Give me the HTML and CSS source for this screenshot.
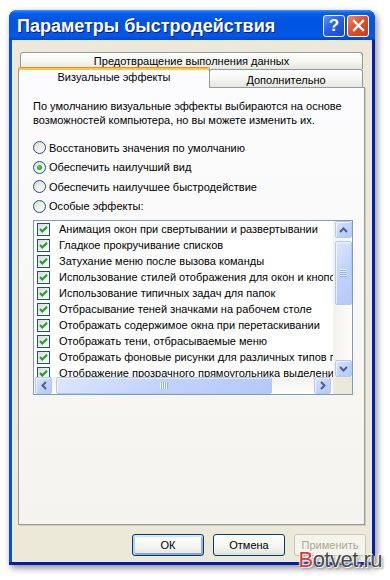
FILE: index.html
```html
<!DOCTYPE html>
<html lang="ru">

<head>
    <meta charset="UTF-8">
    <meta name="viewport" content="width=device-width, initial-scale=1.0">
    <title>Параметры быстродействия</title>
    <link rel="stylesheet" href="styles.css">
</head>

<body>
    <div class="window">
        <div class="titlebar">
            <span class="title">Параметры быстродействия</span>
            <div class="title-btns">
                <div class="tbtn help">?</div>
                <div class="tbtn close">
                    <svg width="13" height="13" viewBox="0 0 13 13">
                        <path d="M2 2 L11 11 M11 2 L2 11" stroke="#fff" stroke-width="2.4" stroke-linecap="square" />
                    </svg>
                </div>
            </div>
        </div>

        <div class="client">
            <!-- tabs, two rows -->
            <div class="tabs">
                <div class="tab-row back">
                    <div class="tab">Предотвращение выполнения данных</div>
                </div>
                <div class="tab-row front">
                    <div class="tab active">Визуальные эффекты</div>
                    <div class="tab other">Дополнительно</div>
                </div>
            </div>

            <div class="panel">
                <p class="intro">По умолчанию визуальные эффекты выбираются на основе возможностей компьютера, но вы можете изменить их.</p>

                <div class="radios">
                    <div class="radio-row"><span class="radio"></span>Восстановить значения по умолчанию</div>
                    <div class="radio-row"><span class="radio on"></span>Обеспечить наилучший вид</div>
                    <div class="radio-row"><span class="radio"></span>Обеспечить наилучшее быстродействие</div>
                    <div class="radio-row"><span class="radio"></span>Особые эффекты:</div>
                </div>

                <div class="listbox">
                    <div class="items" id="items">
                        <!-- filled from js -->
                    </div>
                    <div class="vscroll">
                        <div class="sbtn">
                            <svg width="9" height="6" viewBox="0 0 9 6"><path d="M1 5 L4.5 1.5 L8 5" fill="none" stroke="#4D6185" stroke-width="2" /></svg>
                        </div>
                        <div class="thumb v"><span class="grip"></span></div>
                        <div class="track"></div>
                        <div class="sbtn">
                            <svg width="9" height="6" viewBox="0 0 9 6"><path d="M1 1 L4.5 4.5 L8 1" fill="none" stroke="#4D6185" stroke-width="2" /></svg>
                        </div>
                    </div>
                    <div class="hscroll">
                        <div class="sbtn">
                            <svg width="6" height="9" viewBox="0 0 6 9"><path d="M5 1 L1.5 4.5 L5 8" fill="none" stroke="#4D6185" stroke-width="2" /></svg>
                        </div>
                        <div class="thumb h"><span class="grip"></span></div>
                        <div class="track"></div>
                        <div class="sbtn">
                            <svg width="6" height="9" viewBox="0 0 6 9"><path d="M1 1 L4.5 4.5 L1 8" fill="none" stroke="#4D6185" stroke-width="2" /></svg>
                        </div>
                    </div>
                    <div class="corner"></div>
                </div>
            </div>

            <div class="actions">
                <button class="btn default">ОК</button>
                <button class="btn">Отмена</button>
                <button class="btn disabled">Применить</button>
            </div>
        </div>
    </div>

    <div class="watermark"><span class="red">B</span>otvet.ru</div>

    <script>
        const effects = [
            'Анимация окон при свертывании и развертывании',
            'Гладкое прокручивание списков',
            'Затухание меню после вызова команды',
            'Использование стилей отображения для окон и кнопок',
            'Использование типичных задач для папок',
            'Отбрасывание теней значками на рабочем столе',
            'Отображать содержимое окна при перетаскивании',
            'Отображать тени, отбрасываемые меню',
            'Отображать фоновые рисунки для различных типов папок',
            'Отображение прозрачного прямоугольника выделения'
        ]

        const check = `<span class="check"><svg width="11" height="11" viewBox="0 0 11 11">
            <path d="M2 5 L4.3 7.5 L9 2.8" fill="none" stroke="#21A121" stroke-width="2.2" /></svg></span>`

        document.querySelector('#items').innerHTML = effects
            .map(text => `<div class="item">${check}<span>${text}</span></div>`)
            .join('')
    </script>
</body>

</html>
```

FILE: styles.css
```css
body,
html {
    margin: 0;
}

body {
    position: relative;
    height: 580px;
    overflow: hidden;
    background: #fff;
    font-family: 'Liberation Sans', Arial, sans-serif;
    font-size: 11px;
    color: #000;
}

.window {
    margin: 10px 0 0 9px;
    width: 366px;
    height: 555px;
    display: flex;
    flex-direction: column;
    border-radius: 8px 8px 0 0;
    overflow: hidden;
    background: linear-gradient(to right, #0B4EE0, #0845D8 85%, #0022A2);
    box-shadow: inset 0 -3px 0 #0020A6, 2px 3px 7px rgba(0, 0, 0, 0.45);
}

/* title bar */

.titlebar {
    flex: none;
    height: 30px;
    display: flex;
    align-items: center;
    justify-content: space-between;
    padding: 0 6px 0 8px;
    background: linear-gradient(#3D95FF 0, #0A5EEA 3px, #0057E5 8px, #0054E1 55%, #0059EC 85%, #0048D0 100%);
}

.title {
    color: #fff;
    font-weight: bold;
    font-size: 18px;
    text-shadow: 1px 1px 0 #0A1883;
    padding-top: 2px;
}

.title-btns {
    display: flex;
    gap: 2px;
    padding-top: 1px;
}

.tbtn {
    width: 22px;
    height: 22px;
    box-sizing: border-box;
    border: 1px solid #fff;
    border-radius: 3px;
    display: flex;
    align-items: center;
    justify-content: center;
}

.help {
    background: linear-gradient(135deg, #5C92FA, #2960EA 45%, #1B47D0);
    color: #fff;
    font-weight: bold;
    font-size: 17px;
}

.close {
    background: linear-gradient(135deg, #F08A62, #E2512A 45%, #C73D17);
}

/* client area */

.client {
    flex: 1;
    margin: 0 3px 3px;
    padding: 12px 7px 0 6px;
    display: flex;
    flex-direction: column;
    background: #ECE9D8;
}

.tabs {
    display: flex;
    flex-direction: column;
}

.tab-row {
    display: flex;
}

.tab-row.back {
    margin: 0 2px -2px 2px;
}

.tab {
    box-sizing: border-box;
    height: 17px;
    display: flex;
    align-items: center;
    justify-content: center;
    border: 1px solid #919B9C;
    border-bottom: 0;
    border-radius: 3px 3px 0 0;
    background: linear-gradient(#FFFFFF, #F5F5F1 55%, #E6E5DD);
}

.back .tab {
    flex: 1;
}

.tab-row.front {
    position: relative;
    z-index: 1;
    height: 20px;
    align-items: flex-end;
}

.tab.active {
    position: relative;
    z-index: 2;
    width: 192px;
    height: 21px;
    margin-bottom: -1px;
    padding-bottom: 2px;
    border-top-color: #E68B2C;
    background: #FCFCFE;
    box-shadow: inset 0 2px 0 #FFC83C;
}

.tab.other {
    width: 154px;
    height: 18px;
    margin-left: -1px;
    padding-top: 2px;
}

.panel {
    box-sizing: border-box;
    height: 438px;
    padding: 11px 10px 0 14px;
    border: 1px solid #919B9C;
    background: linear-gradient(#FCFCFE, #F4F3EE);
    box-shadow: 1px 1px 0 #D0CEBF;
}

.intro {
    margin: 0;
    line-height: 14px;
}

.radios {
    display: flex;
    flex-direction: column;
    gap: 6.5px;
    margin-top: 14px;
}

.radio-row {
    height: 13px;
    display: flex;
    align-items: center;
    gap: 3px;
}

.radio {
    width: 13px;
    height: 13px;
    box-sizing: border-box;
    border: 1px solid #1C5180;
    border-radius: 50%;
    background: linear-gradient(135deg, #DCDCD7, #FFFFFF);
    display: flex;
    align-items: center;
    justify-content: center;
}

.radio.on::after {
    content: '';
    width: 5px;
    height: 5px;
    border-radius: 50%;
    background: radial-gradient(circle at 40% 40%, #55D551, #21A121 70%);
}

/* list box */

.listbox {
    margin-top: 7.5px;
    width: 320px;
    height: 175px;
    box-sizing: border-box;
    border: 1px solid #7F9DB9;
    background: #fff;
    display: grid;
    grid-template-columns: 1fr 19px;
    grid-template-rows: 1fr 17px;
}

.items {
    overflow: hidden;
}

.item {
    height: 16px;
    display: flex;
    align-items: center;
    gap: 9px;
    padding-left: 3px;
    white-space: nowrap;
}

.check {
    flex: none;
    width: 13px;
    height: 13px;
    box-sizing: border-box;
    border: 1px solid #1C5180;
    background: linear-gradient(135deg, #DCDCD7, #FFFFFF);
    display: flex;
}

.vscroll {
    display: flex;
    flex-direction: column;
    align-items: center;
    padding-left: 1px;
    background: linear-gradient(to right, #F3F1EC, #FEFEFB);
}

.hscroll {
    display: flex;
    align-items: center;
    padding-left: 1px;
    background: linear-gradient(#F3F1EC, #FEFEFB);
}

.track {
    flex: 1;
}

.sbtn,
.thumb {
    box-sizing: border-box;
    border: 1px solid #B4C8F6;
    border-radius: 2px;
    background: linear-gradient(135deg, #DCE6FD, #C1D3FB 50%, #B5C9F8);
    box-shadow: inset 1px 1px 0 rgba(255, 255, 255, 0.6);
    display: flex;
    align-items: center;
    justify-content: center;
}

.sbtn {
    width: 17px;
    height: 17px;
}

.hscroll .sbtn {
    margin-right: 2px;
}

.thumb.v {
    width: 17px;
    height: 64px;
    margin-top: 3px;
}

.thumb.h {
    width: 216px;
    height: 17px;
    margin-left: 2px;
}

.thumb.v .grip {
    width: 7px;
    height: 8px;
    background: repeating-linear-gradient(#EEF4FE 0 1px, #8CB0F8 1px 2px);
}

.thumb.h .grip {
    width: 8px;
    height: 7px;
    background: repeating-linear-gradient(to right, #EEF4FE 0 1px, #8CB0F8 1px 2px);
}

.corner {
    background: #ECE9D8;
}

/* buttons */

.actions {
    display: flex;
    justify-content: flex-end;
    gap: 9px;
    margin: 9px -1px 0 0;
}

.btn {
    width: 72px;
    height: 22px;
    box-sizing: border-box;
    padding: 0;
    border: 1px solid #003C74;
    border-radius: 3px;
    background: linear-gradient(#FFFFFF, #F4F4F0 60%, #E3E2DA);
    font-family: 'Liberation Sans', Arial, sans-serif;
    font-size: 11px;
    color: #000;
}

.btn.default {
    box-shadow: inset 0 2px 0 #CEE7FF, inset 2px 0 0 #B7CFF3, inset -2px 0 0 #97AEE2, inset 0 -2px 0 #8AA3DE;
}

.btn.disabled {
    border-color: #C9C7BA;
    background: #F5F4EA;
    color: #ACA899;
}

.watermark {
    position: absolute;
    right: 8px;
    bottom: 7px;
    font-size: 22px;
    letter-spacing: -0.5px;
    color: #4A4A4A;
    text-shadow: 1px 1px 1px #fff, -1px -1px 1px #fff, 2px 2px 2px #999;
}

.watermark .red {
    color: #D83A3A;
}
```
